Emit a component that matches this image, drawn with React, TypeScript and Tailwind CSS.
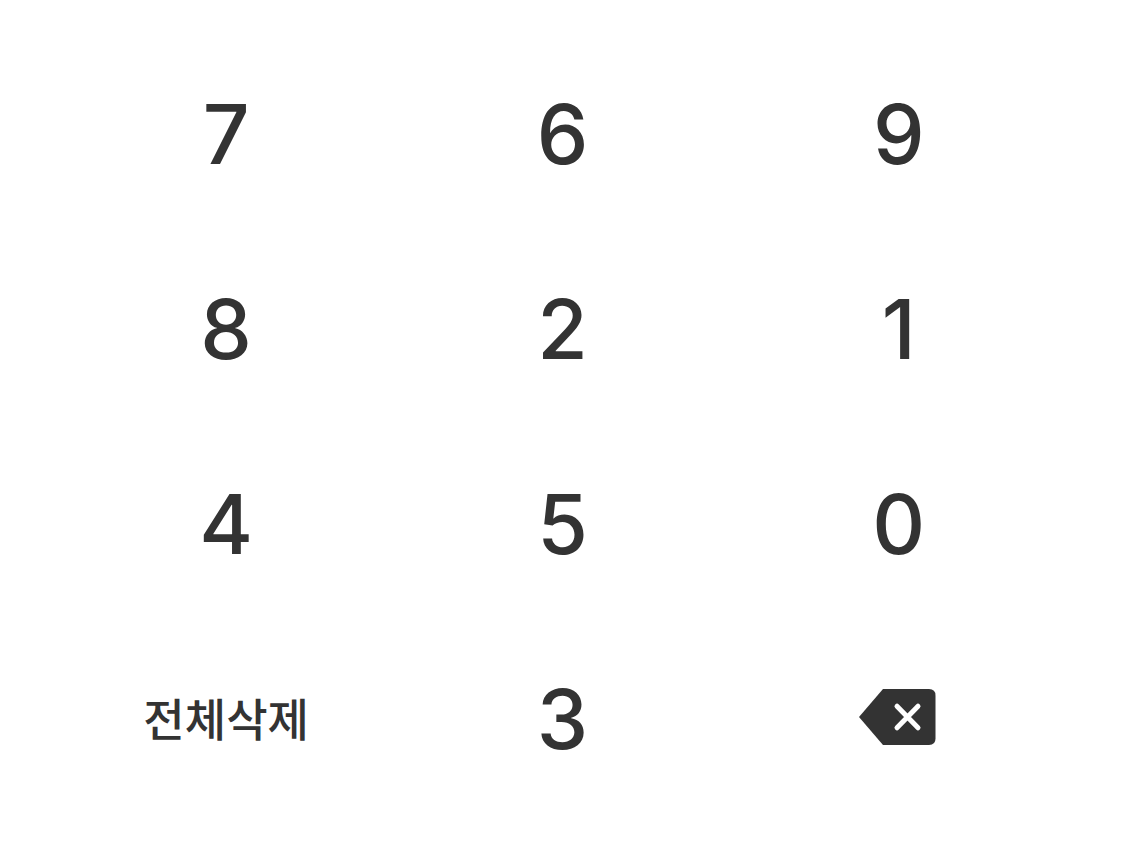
const keys = ['7', '6', '9', '8', '2', '1', '4', '5', '0'];

const digitClass =
  "flex h-[195px] cursor-pointer items-center justify-center font-['Inter',sans-serif] text-[82px] leading-none font-medium text-[#333333]";

export default function App() {
  return (
    <main className="min-h-screen bg-white px-[58px] pt-[37px]">
      <div className="grid grid-cols-3">
        {keys.map((key) => (
          <button key={key} type="button" className={digitClass}>
            {key}
          </button>
        ))}
        <button
          type="button"
          className="flex h-[195px] cursor-pointer items-center justify-center pb-1 font-['Noto_Sans_CJK_KR',sans-serif] text-[45px] leading-none font-medium whitespace-nowrap text-[#333333]"
        >
          전체삭제
        </button>
        <button type="button" className={digitClass}>
          3
        </button>
        <button
          type="button"
          aria-label="지우기"
          className="flex h-[195px] cursor-pointer items-center justify-center pb-1.5"
        >
          <svg width="80" height="58" viewBox="0 0 80 58" fill="none" aria-hidden="true">
            <path d="M24 1H70Q76.500 1 76.500 7.500V50.500Q76.500 57 70 57H24L0 29Z" fill="#333333" />
            <path d="M38 18.200L59 39.800M59 18.200L38 39.800" stroke="white" strokeWidth="5" strokeLinecap="round" />
          </svg>
        </button>
      </div>
    </main>
  );
}
